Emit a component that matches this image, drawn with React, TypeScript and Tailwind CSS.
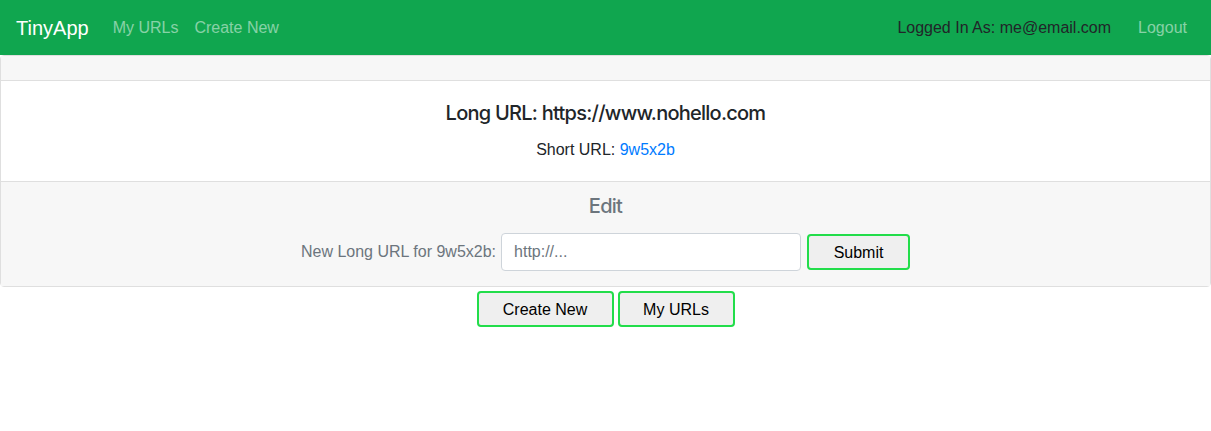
import React from "react";

export default function App() {
  const font = { fontFamily: "'Liberation Sans', Arial, sans-serif" };
  return (
    <div className="min-h-[431px] bg-white text-[#212529]" style={font}>
      <nav className="flex h-[55px] items-center bg-[#10a64f] px-4">
        <span className="mr-4 text-[20px] leading-[30px] text-white">TinyApp</span>
        <span className="px-2 text-[16px] text-white/50">My URLs</span>
        <span className="px-2 text-[16px] text-white/50">Create New</span>
        <div className="ml-auto flex items-center">
          <span className="text-[16px] text-[#212529]">Logged In As: me@email.com</span>
          <span className="ml-[19px] px-2 text-[16px] text-white/50">Logout</span>
        </div>
      </nav>
      <div className="rounded-[4px] border border-[#dfdfdf]">
        <div className="h-[25px] border-b border-[#dfdfdf] bg-[#f7f7f7]" />
        <div className="flex flex-col items-center px-5 py-5 bg-white">
          <h5 className="mb-3 font-['Inter'] text-[20px] font-medium leading-[24px] tracking-[-0.75px] [font-feature-settings:'calt'_0]">
            Long URL: https://www.nohello.com
          </h5>
          <p className="pt-[1px] text-[16px] leading-[23px]">
            Short URL: <span className="text-[#007bff]">9w5x2b</span>
          </p>
        </div>
        <div className="flex flex-col items-center border-t border-[#dfdfdf] bg-[#f7f7f7] px-5 pt-3 pb-[15px]">
          <h5 className="font-['Inter'] text-[20px] font-medium leading-[24px] tracking-[-0.75px] text-[#6c757d]">Edit</h5>
          <div className="mt-[15px] flex items-center">
            <label className="mr-[5px] text-[16px] text-[#6c757d]">New Long URL for 9w5x2b:</label>
            <div className="flex h-[38px] w-[300px] items-center rounded-[4px] border border-[#ced4da] bg-white px-3 text-[16px] text-[#6c757d]">
              http://...
            </div>
            <button className="ml-[6px] h-[36px] w-[103px] rounded-[4px] border-2 border-[#22dd4a] bg-[#efefef] pt-[1px] text-[16px] text-black">
              Submit
            </button>
          </div>
        </div>
      </div>
      <div className="mt-[4px] flex justify-center gap-[4px]">
        <button className="h-[36px] w-[137px] rounded-[4px] border-2 border-[#22dd4a] bg-[#efefef] pt-[1px] text-[16px] text-black">
          Create New
        </button>
        <button className="h-[36px] w-[117px] rounded-[4px] border-2 border-[#22dd4a] bg-[#efefef] pt-[1px] text-[16px] text-black">
          My URLs
        </button>
      </div>
    </div>
  );
}
